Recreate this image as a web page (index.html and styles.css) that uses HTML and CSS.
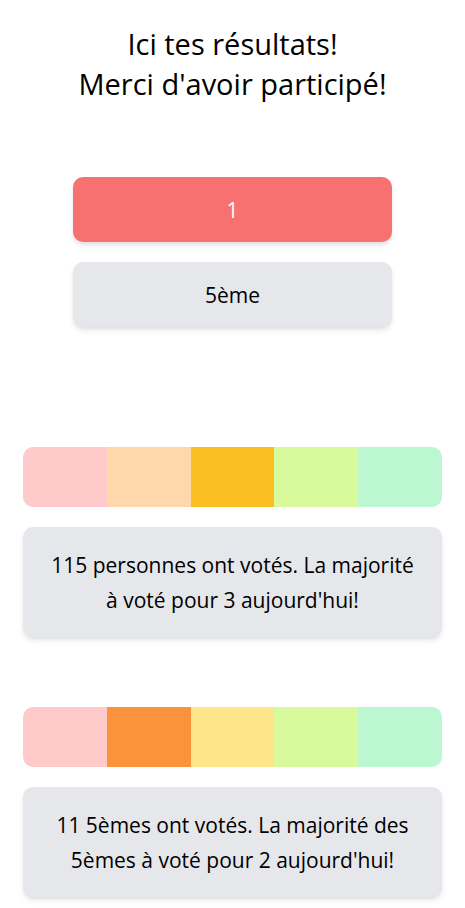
FILE: index.html
```html
<!DOCTYPE html>
<html lang="fr">
<head>
<meta charset="utf-8">
<meta name="viewport" content="width=device-width, initial-scale=1">
<title>Résultats</title>
<link rel="stylesheet" href="styles.css">
</head>
<body>
<main class="page">
  <h1 class="title">Ici tes résultats!<br>Merci d'avoir participé!</h1>
  <section class="answers">
    <p class="card vote">1</p>
    <p class="card">5ème</p>
  </section>
  <section class="result">
    <div class="scale">
      <span class="step red"></span>
      <span class="step orange"></span>
      <span class="step amber chosen"></span>
      <span class="step lime"></span>
      <span class="step green"></span>
    </div>
    <p class="card summary">115 personnes ont votés. La majorité à voté pour 3 aujourd'hui!</p>
  </section>
  <section class="result">
    <div class="scale">
      <span class="step red"></span>
      <span class="step orange chosen"></span>
      <span class="step amber"></span>
      <span class="step lime"></span>
      <span class="step green"></span>
    </div>
    <p class="card summary">11 5èmes ont votés. La majorité des 5èmes à voté pour 2 aujourd'hui!</p>
  </section>
</main>
</body>
</html>
```

FILE: styles.css
```css
* {
  box-sizing: border-box;
}

body {
  margin: 0;
  background: #fff;
  color: #000;
  font-family: "Open Sans", "Noto Sans", sans-serif;
}

.page {
  padding: 24px 23px 10px;
}

.title {
  margin: 0;
  font-size: 29px;
  font-weight: 400;
  line-height: 40px;
  text-align: center;
}

.answers {
  display: grid;
  gap: 20px;
  margin: 73px 50px 120px;
}

.card {
  margin: 0;
  padding: 16px 20px 14px;
  border-radius: 10px;
  background: #e5e7eb;
  box-shadow: 0 4px 6px -1px rgb(0 0 0 / 10%), 0 2px 4px -1px rgb(0 0 0 / 6%);
  font-size: 21px;
  line-height: 35px;
  text-align: center;
}

.vote {
  background: #f87171;
  color: #fff;
}

.result {
  display: grid;
  gap: 20px;
}

.result + .result {
  margin-top: 70px;
}

.scale {
  display: grid;
  grid-template-columns: repeat(5, 1fr);
  height: 60px;
  overflow: hidden;
  border-radius: 10px;
}

.summary {
  padding: 21px 20px 19px;
}

.red {
  background: #fecaca;
}

.orange {
  background: #fed7aa;
}

.orange.chosen {
  background: #fb923c;
}

.amber {
  background: #fde68a;
}

.amber.chosen {
  background: #fbbf24;
}

.lime {
  background: #d9f99d;
}

.green {
  background: #bbf7d0;
}
```
